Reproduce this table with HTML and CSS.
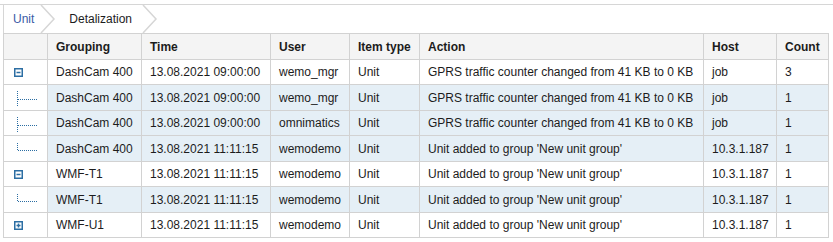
FILE: index.html
```html
<!DOCTYPE html>
<html>
<head>
<meta charset="utf-8">
<link rel="stylesheet" href="styles.css">
</head>
<body>
<div class="topline"></div>
<div class="panel">
  <div class="crumbs">
    <span class="crumb link">Unit</span>
    <svg class="chev" width="16" height="28" viewBox="0 0 16 28"><polyline points="1,0 14,14 1,28" fill="none" stroke="#d6d6d6" stroke-width="1.5"/></svg>
    <span class="crumb cur">Detalization</span>
    <svg class="chev" width="16" height="28" viewBox="0 0 16 28"><polyline points="1,0 14,14 1,28" fill="none" stroke="#d6d6d6" stroke-width="1.5"/></svg>
  </div>
  <table class="grid">
    <colgroup>
      <col style="width:44px"><col style="width:94px"><col style="width:129px"><col style="width:79px"><col style="width:70px"><col style="width:284px"><col style="width:73px"><col style="width:52px">
    </colgroup>
    <thead>
      <tr><th></th><th>Grouping</th><th>Time</th><th>User</th><th>Item type</th><th>Action</th><th>Host</th><th>Count</th></tr>
    </thead>
    <tbody>
      <tr class="parent">
        <td class="tree"><svg width="40" height="24" viewBox="0 0 40 24"><rect x="10.75" y="8.75" width="7.5" height="7.5" fill="none" stroke="#2c6ea3" stroke-width="1.5"/><line x1="12.5" y1="12.5" x2="16.5" y2="12.5" stroke="#2c6ea3" stroke-width="1.5"/></svg></td>
        <td>DashCam 400</td><td>13.08.2021 09:00:00</td><td>wemo_mgr</td><td>Unit</td><td>GPRS traffic counter changed from 41 KB to 0 KB</td><td>job</td><td>3</td>
      </tr>
      <tr class="child">
        <td class="tree"><svg width="40" height="24" viewBox="0 0 40 24"><line x1="13.5" y1="6" x2="13.5" y2="21" stroke="#2c6ea3" stroke-dasharray="1 1"/><line x1="14" y1="14.5" x2="34" y2="14.5" stroke="#2c6ea3" stroke-dasharray="1 1"/></svg></td>
        <td>DashCam 400</td><td>13.08.2021 09:00:00</td><td>wemo_mgr</td><td>Unit</td><td>GPRS traffic counter changed from 41 KB to 0 KB</td><td>job</td><td>1</td>
      </tr>
      <tr class="child">
        <td class="tree"><svg width="40" height="24" viewBox="0 0 40 24"><line x1="13.5" y1="6" x2="13.5" y2="21" stroke="#2c6ea3" stroke-dasharray="1 1"/><line x1="14" y1="14.5" x2="34" y2="14.5" stroke="#2c6ea3" stroke-dasharray="1 1"/></svg></td>
        <td>DashCam 400</td><td>13.08.2021 09:00:00</td><td>omnimatics</td><td>Unit</td><td>GPRS traffic counter changed from 41 KB to 0 KB</td><td>job</td><td>1</td>
      </tr>
      <tr class="child">
        <td class="tree"><svg width="40" height="24" viewBox="0 0 40 24"><line x1="13.5" y1="7" x2="13.5" y2="14" stroke="#2c6ea3" stroke-dasharray="1 1"/><line x1="14" y1="14.5" x2="34" y2="14.5" stroke="#2c6ea3" stroke-dasharray="1 1"/></svg></td>
        <td>DashCam 400</td><td>13.08.2021 11:11:15</td><td>wemodemo</td><td>Unit</td><td>Unit added to group 'New unit group'</td><td>10.3.1.187</td><td>1</td>
      </tr>
      <tr class="parent">
        <td class="tree"><svg width="40" height="24" viewBox="0 0 40 24"><rect x="10.75" y="8.75" width="7.5" height="7.5" fill="none" stroke="#2c6ea3" stroke-width="1.5"/><line x1="12.5" y1="12.5" x2="16.5" y2="12.5" stroke="#2c6ea3" stroke-width="1.5"/></svg></td>
        <td>WMF-T1</td><td>13.08.2021 11:11:15</td><td>wemodemo</td><td>Unit</td><td>Unit added to group 'New unit group'</td><td>10.3.1.187</td><td>1</td>
      </tr>
      <tr class="child">
        <td class="tree"><svg width="40" height="24" viewBox="0 0 40 24"><line x1="13.5" y1="7" x2="13.5" y2="14" stroke="#2c6ea3" stroke-dasharray="1 1"/><line x1="14" y1="14.5" x2="34" y2="14.5" stroke="#2c6ea3" stroke-dasharray="1 1"/></svg></td>
        <td>WMF-T1</td><td>13.08.2021 11:11:15</td><td>wemodemo</td><td>Unit</td><td>Unit added to group 'New unit group'</td><td>10.3.1.187</td><td>1</td>
      </tr>
      <tr class="parent">
        <td class="tree"><svg width="40" height="24" viewBox="0 0 40 24"><rect x="10.75" y="8.75" width="7.5" height="7.5" fill="none" stroke="#2c6ea3" stroke-width="1.5"/><line x1="12.5" y1="12.5" x2="16.5" y2="12.5" stroke="#2c6ea3" stroke-width="1.5"/><line x1="14.5" y1="10.5" x2="14.5" y2="14.5" stroke="#2c6ea3" stroke-width="1.5"/></svg></td>
        <td>WMF-U1</td><td>13.08.2021 11:11:15</td><td>wemodemo</td><td>Unit</td><td>Unit added to group 'New unit group'</td><td>10.3.1.187</td><td>1</td>
      </tr>
    </tbody>
  </table>
</div>
</body>
</html>
```

FILE: styles.css
```css
html, body {
  margin: 0;
  padding: 0;
  background: #ffffff;
}
body {
  font-family: "Liberation Sans", Arial, sans-serif;
  font-size: 12px;
  color: #1c1c1c;
  padding-top: 4px;
}
.topline {
  height: 0;
  border-top: 1px solid #d6d6d6;
}
.panel {
  margin-left: 3px;
  width: 826px;
}
.crumbs {
  display: flex;
  align-items: center;
  height: 28px;
  border-left: 1px solid #d6d6d6;
}
.crumb {
  line-height: 28px;
}
.crumb.link {
  color: #3a5ba6;
  padding-left: 9px;
  padding-right: 6px;
}
.crumb.cur {
  color: #1c1c1c;
  padding-left: 13px;
  padding-right: 10px;
}
.chev {
  display: block;
  height: 28px;
}
.grid {
  border-collapse: collapse;
  table-layout: fixed;
  width: 826px;
}
.grid th, .grid td {
  border: 1px solid #d2d2d2;
  height: 23.5px;
  padding: 1px 8px 0;
  text-align: left;
  white-space: nowrap;
  overflow: hidden;
}
.grid th {
  background: #f4f4f4;
  font-weight: bold;
  color: #1c1c1c;
}
.grid td.tree {
  padding: 0;
  height: 24.5px;
  background: #ffffff;
}
.grid td.tree svg {
  display: block;
}
.grid tr.child td {
  background: #e5eff6;
}
.grid tr.child td.tree {
  background: #ffffff;
}
```
